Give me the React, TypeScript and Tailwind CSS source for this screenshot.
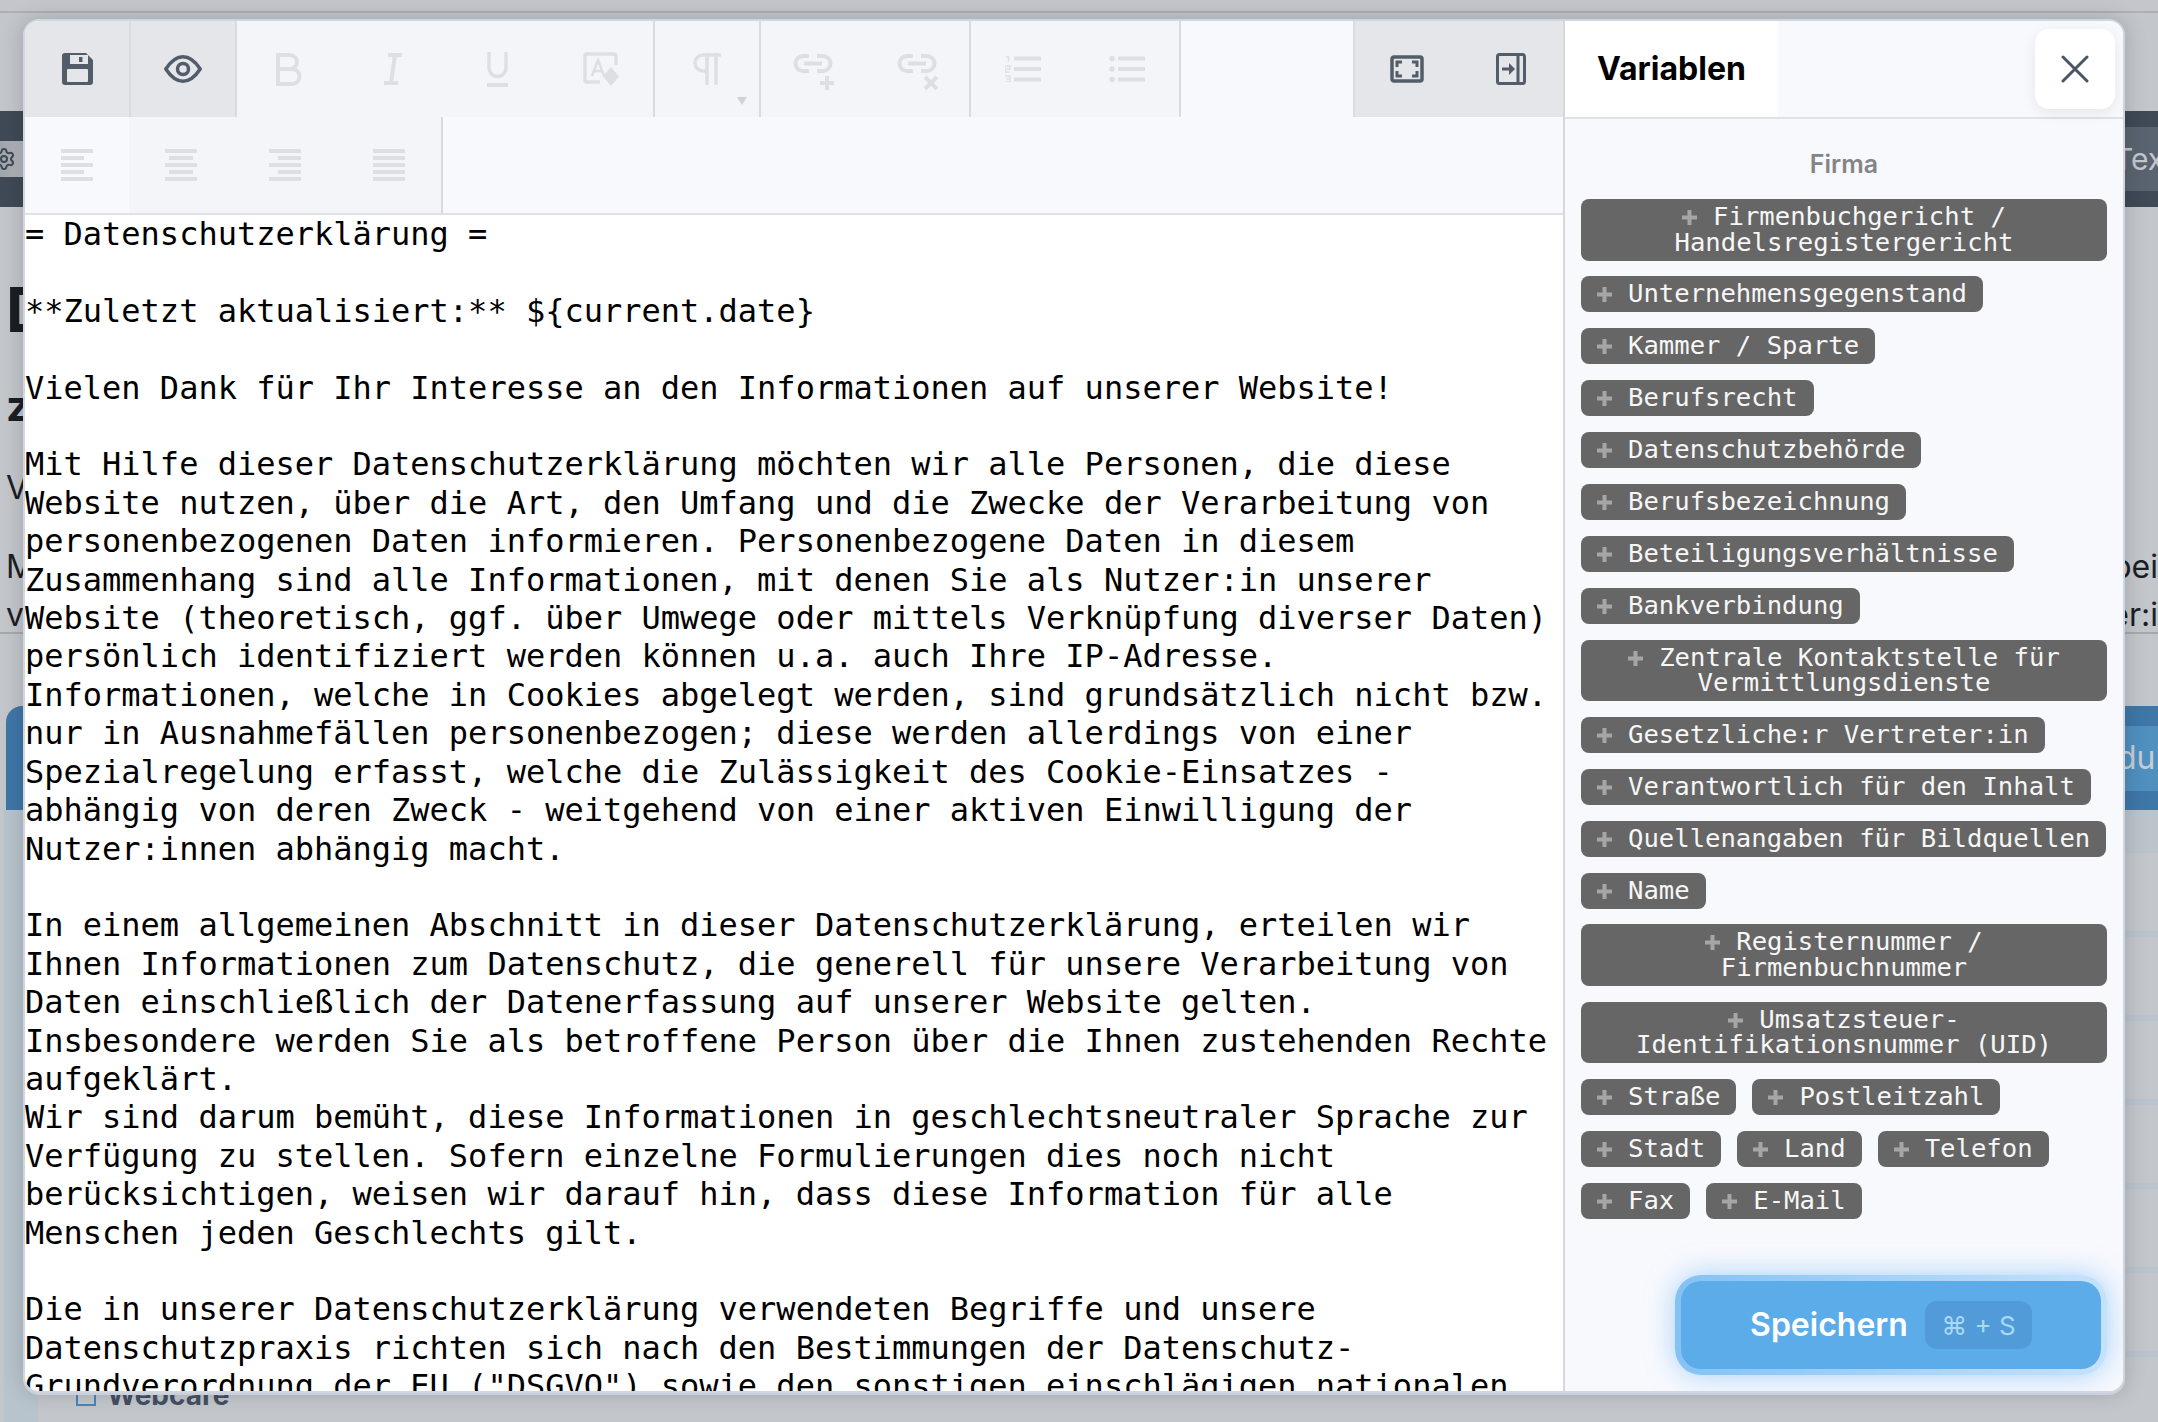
import { FC, ReactNode } from "react";
import { Settings } from "lucide-react";

const mono = "font-['DejaVu_Sans_Mono',monospace]";
const sans = "font-['Inter','Liberation_Sans',sans-serif]";

const editorText = `= Datenschutzerklärung =

**Zuletzt aktualisiert:** \${current.date}

Vielen Dank für Ihr Interesse an den Informationen auf unserer Website!

Mit Hilfe dieser Datenschutzerklärung möchten wir alle Personen, die diese Website nutzen, über die Art, den Umfang und die Zwecke der Verarbeitung von personenbezogenen Daten informieren. Personenbezogene Daten in diesem Zusammenhang sind alle Informationen, mit denen Sie als Nutzer:in unserer Website (theoretisch, ggf. über Umwege oder mittels Verknüpfung diverser Daten) persönlich identifiziert werden können u.a. auch Ihre IP-Adresse.
Informationen, welche in Cookies abgelegt werden, sind grundsätzlich nicht bzw. nur in Ausnahmefällen personenbezogen; diese werden allerdings von einer Spezialregelung erfasst, welche die Zulässigkeit des Cookie-Einsatzes - abhängig von deren Zweck - weitgehend von einer aktiven Einwilligung der Nutzer:innen abhängig macht.

In einem allgemeinen Abschnitt in dieser Datenschutzerklärung, erteilen wir Ihnen Informationen zum Datenschutz, die generell für unsere Verarbeitung von Daten einschließlich der Datenerfassung auf unserer Website gelten.
Insbesondere werden Sie als betroffene Person über die Ihnen zustehenden Rechte aufgeklärt.
Wir sind darum bemüht, diese Informationen in geschlechtsneutraler Sprache zur Verfügung zu stellen. Sofern einzelne Formulierungen dies noch nicht berücksichtigen, weisen wir darauf hin, dass diese Information für alle Menschen jeden Geschlechts gilt.

Die in unserer Datenschutzerklärung verwendeten Begriffe und unsere Datenschutzpraxis richten sich nach den Bestimmungen der Datenschutz-Grundverordnung der EU ("DSGVO") sowie den sonstigen einschlägigen nationalen`;

const variables = [
  "Firmenbuchgericht / Handelsregistergericht",
  "Unternehmensgegenstand",
  "Kammer / Sparte",
  "Berufsrecht",
  "Datenschutzbehörde",
  "Berufsbezeichnung",
  "Beteiligungsverhältnisse",
  "Bankverbindung",
  "Zentrale Kontaktstelle für Vermittlungsdienste",
  "Gesetzliche:r Vertreter:in",
  "Verantwortlich für den Inhalt",
  "Quellenangaben für Bildquellen",
  "Name",
  "Registernummer / Firmenbuchnummer",
  "Umsatzsteuer-Identifikationsnummer (UID)",
  "Straße",
  "Postleitzahl",
  "Stadt",
  "Land",
  "Telefon",
  "Fax",
  "E-Mail",
];

const dark = "#535c69";
const faded = "#dddfe3";

const SaveIcon = () => (
  <svg width="31" height="32" viewBox="0 0 31 32">
    <path d="M3 0H24L31 7V29a3 3 0 0 1-3 3H3a3 3 0 0 1-3-3V3a3 3 0 0 1 3-3Z" fill={dark} />
    <rect x="8" y="2" width="18" height="9" fill="#e4e6ea" />
    <rect x="17" y="4" width="3.5" height="5" fill={dark} />
    <rect x="5" y="16" width="21" height="13" rx="1" fill="#e4e6ea" />
  </svg>
);

const EyeIcon = () => (
  <svg width="38" height="28" viewBox="0 0 38 28" fill="none" stroke={dark} strokeWidth="3.5">
    <path d="M1.8 14C8 4.5 13 1.8 19 1.8S30 4.5 36.2 14C30 23.5 25 26.2 19 26.2S8 23.5 1.8 14Z" strokeLinejoin="round" />
    <circle cx="19" cy="14" r="5.5" />
  </svg>
);

const BoldIcon = () => (
  <svg width="26" height="33" viewBox="0 0 26 33" fill="none" stroke={faded} strokeWidth="4">
    <path d="M2 2H14a7 7 0 0 1 0 14H2ZM2 16H16a7.5 7.5 0 0 1 0 15H2Z" />
  </svg>
);

const ItalicIcon = () => (
  <svg width="18" height="32" viewBox="0 0 18 32" fill="none" stroke={faded} strokeWidth="4">
    <path d="M4 2H18M0 30H14M11 2 7 30" />
  </svg>
);

const UnderlineIcon = () => (
  <svg width="21" height="35" viewBox="0 0 21 35" fill="none" stroke={faded} strokeWidth="3.5">
    <path d="M2 0V16a8.5 8.5 0 0 0 17 0V0" />
    <path d="M0 33H21" strokeWidth="4" />
  </svg>
);

const ImageIcon = () => (
  <svg width="37" height="34" viewBox="0 0 37 34" fill="none" stroke={faded} strokeWidth="3.5">
    <path d="M33 13V4a2 2 0 0 0-2-2H4a2 2 0 0 0-2 2V28a2 2 0 0 0 2 2H17" />
    <path d="M9 24 15 8l6 16M11 19h8" strokeWidth="2.5" />
    <path d="M28 15l8 9.5-8 9.5-8-9.5Z" fill={faded} stroke="none" />
  </svg>
);

const PilcrowIcon = () => (
  <svg width="28" height="32" viewBox="0 0 28 32" fill="none" stroke={faded} strokeWidth="3.5">
    <path d="M14 2H10a8 8 0 0 0 0 16h4" />
    <path d="M14 0V32M23 0V32M12 2H28" />
  </svg>
);

const LinkIcon: FC<{ remove?: boolean }> = ({ remove }) => (
  <svg width="41" height="36" viewBox="0 0 41 36" fill="none" stroke={faded} strokeWidth="4" className="mt-1.5">
    <path d="M16 2H10a7.5 7.5 0 0 0 0 15h6M24 2h6a7.5 7.5 0 0 1 0 15h-6M11 9.5H29" />
    {remove ? <path d="M28 23 40 35M40 23 28 35" /> : <path d="M34 22V36M27 29H41" />}
  </svg>
);

const OrderedIcon = () => (
  <svg width="36" height="26" viewBox="0 0 36 26" fill="none" stroke={faded}>
    <path d="M9 2.5H36M9 13H36M9 23.5H36" strokeWidth="4" />
    <path d="M1 1H3.5V6M0 10H5V13H0V16H5M0 20H5V23H1.5M5 23V26H0" strokeWidth="1.5" />
  </svg>
);

const BulletIcon = () => (
  <svg width="36" height="26" viewBox="0 0 36 26" fill={faded}>
    <circle cx="3" cy="2.5" r="2.7" />
    <circle cx="3" cy="13" r="2.7" />
    <circle cx="3" cy="23.5" r="2.7" />
    <rect x="9" y="0.5" width="27" height="4" />
    <rect x="9" y="11" width="27" height="4" />
    <rect x="9" y="21.5" width="27" height="4" />
  </svg>
);

const AlignIcon: FC<{ bars: [number, number][] }> = ({ bars }) => (
  <svg width="32" height="32" viewBox="0 0 32 32" fill={faded}>
    {bars.map(([x, w], i) => (
      <rect key={i} x={x} y={i * 7} width={w} height="4" />
    ))}
  </svg>
);

const FullscreenIcon = () => (
  <svg width="34" height="28" viewBox="0 0 34 28" fill="none" stroke={dark}>
    <rect x="2" y="2" width="30" height="24" rx="2" strokeWidth="3.5" />
    <path d="M7 12V7H12M22 7H27V12M27 16V21H22M12 21H7V16" strokeWidth="3" />
  </svg>
);

const PanelIcon = () => (
  <svg width="30" height="32" viewBox="0 0 30 32" fill="none" stroke={dark} strokeWidth="3">
    <rect x="1.5" y="1.5" width="27" height="29" rx="2" />
    <path d="M22 2V30" />
    <path d="M6 16H14" />
    <path d="M13 10l6 6-6 6Z" fill={dark} stroke="none" />
  </svg>
);

const ToolButton: FC<{ children: ReactNode; active?: boolean; muted?: boolean; edge?: boolean }> = ({
  children,
  active,
  muted,
  edge,
}) => (
  <div
    className={`relative flex h-full w-[104px] shrink-0 items-center justify-center ${
      active ? "bg-[#e4e6ea]" : muted ? "bg-[#f3f5f9]" : ""
    } ${edge ? "border-r-2 border-[#d9dbdf] w-[106px]" : ""}`}
  >
    {children}
  </div>
);

const Toolbar = () => (
  <div className="shrink-0 border-b-2 border-[#dfe1e5] bg-[#f7f9fd]">
    <div className="flex h-24">
      <ToolButton active edge><SaveIcon /></ToolButton>
      <ToolButton active edge><EyeIcon /></ToolButton>
      <ToolButton muted><BoldIcon /></ToolButton>
      <ToolButton muted><ItalicIcon /></ToolButton>
      <ToolButton muted><UnderlineIcon /></ToolButton>
      <ToolButton muted><ImageIcon /></ToolButton>
      <div className="w-0.5 bg-[#d9dbdf]" />
      <ToolButton muted>
        <PilcrowIcon />
        <div className="absolute right-[12px] bottom-[12px] h-0 w-0 border-x-[5.5px] border-t-[8px] border-x-transparent border-t-[#d0d2d6]" />
      </ToolButton>
      <div className="w-0.5 bg-[#d9dbdf]" />
      <ToolButton muted><LinkIcon /></ToolButton>
      <ToolButton muted><LinkIcon remove /></ToolButton>
      <div className="w-0.5 bg-[#d9dbdf]" />
      <ToolButton muted><OrderedIcon /></ToolButton>
      <ToolButton muted><BulletIcon /></ToolButton>
      <div className="w-0.5 bg-[#d9dbdf]" />
      <div className="flex-1 border-r-2 border-[#d9dbdf]" />
      <ToolButton active><FullscreenIcon /></ToolButton>
      <ToolButton active><PanelIcon /></ToolButton>
    </div>
    <div className="flex h-24">
      <ToolButton>
        <AlignIcon bars={[[0, 32], [0, 23], [0, 32], [0, 23], [0, 32]]} />
      </ToolButton>
      <ToolButton muted>
        <AlignIcon bars={[[0, 32], [4, 24], [0, 32], [4, 24], [0, 32]]} />
      </ToolButton>
      <ToolButton muted>
        <AlignIcon bars={[[0, 32], [9, 23], [0, 32], [9, 23], [0, 32]]} />
      </ToolButton>
      <ToolButton muted>
        <AlignIcon bars={[[0, 32], [0, 32], [0, 32], [0, 32], [0, 32]]} />
      </ToolButton>
      <div className="w-0.5 bg-[#d9dbdf]" />
    </div>
  </div>
);

const VariableChip: FC<{ label: string }> = ({ label }) => (
  <button
    type="button"
    className={`${mono} max-w-full rounded-lg bg-[#666666] pt-[5px] pr-4 pb-[5.5px] pl-4 text-center text-[25.6px] leading-[25.5px] text-[#f7f7f7]`}
  >
    <svg width="15" height="15" viewBox="0 0 15 15" className="mr-4 inline-block align-[0px]" fill="#a6a6a6">
      <rect x="0" y="5.5" width="15" height="4" />
      <rect x="5.5" y="0" width="4" height="15" />
    </svg>
    {label}
  </button>
);

const Sidebar = () => (
  <div className="relative flex flex-1 flex-col border-l-2 border-[#d5d7db] bg-[#f8f9fd]">
    <div className="flex h-[98px] shrink-0 items-start justify-between border-b-2 border-[#e0e2e6] pr-2">
      <div className={`${sans} flex h-24 w-[213px] items-center bg-white pl-8 text-[32px] font-bold text-black`}>
        Variablen
      </div>
      <button
        type="button"
        className="relative z-10 mt-2 flex h-20 w-20 items-center justify-center rounded-[14px] bg-white shadow-[0_4px_14px_rgba(0,0,0,0.08)]"
      >
        <svg width="28" height="28" viewBox="0 0 28 28" fill="none" stroke="#4a5563" strokeWidth="3">
          <path d="M2 2 26 26M26 2 2 26" strokeLinecap="round" />
        </svg>
      </button>
    </div>
    <div className="pt-[29px] pr-4 pl-4">
      <div className={`${sans} mb-[19px] text-center text-[25px] leading-8 font-semibold text-[#858585]`}>Firma</div>
      <div className="flex flex-wrap gap-x-4 gap-y-[15.88px]">
        {variables.map((v) => (
          <VariableChip key={v} label={v} />
        ))}
      </div>
    </div>
    <div className="absolute right-4 bottom-4 rounded-[26px] bg-gradient-to-r from-[#84c2f4] to-[#c5e2fb] p-[6px] shadow-[0_0_28px_rgba(96,175,245,0.55)]">
      <button
        type="button"
        className={`${sans} flex h-[88px] w-[420px] items-center justify-center gap-[17px] rounded-[20px] bg-[#5bace9] text-[32px] font-semibold text-white`}
      >
        Speichern
        <span className="flex h-12 w-[107px] items-center justify-center rounded-xl bg-[#519cd8] text-[26px] font-normal text-[#a9d7f6]">
          ⌘ + S
        </span>
      </button>
    </div>
  </div>
);

const Modal = () => (
  <div className="absolute top-[19px] left-[23px] flex h-[1374px] w-[2102px] overflow-hidden rounded-2xl border-2 border-[#cfd6df] bg-white shadow-[0_2px_0_#c9d0d9,0_0_22px_rgba(0,0,0,0.18)]">
    <div className="flex w-[1538px] shrink-0 flex-col">
      <Toolbar />
      <div className={`${mono} flex-1 overflow-hidden text-[32px] leading-[38.4px] whitespace-pre-wrap text-black`}>
        {editorText}
      </div>
    </div>
    <Sidebar />
  </div>
);

// dimmed page behind the dialog, only the edges stay visible
const BackgroundPage = () => (
  <div className="flex h-full flex-col overflow-hidden text-[#1b1f25]">
    <div className="h-[13px] shrink-0 border-b-2 border-[#aeb0b6]" />
    <div className="h-[98px] shrink-0" />
    <div className="flex h-24 shrink-0 items-center justify-between bg-[#3f4a56]">
      <div className="flex h-[36px] w-[24px] items-center overflow-hidden bg-gradient-to-r from-[#a0a5ab] to-[#b5b8bd]">
        <Settings size={24} color="#3f4a56" strokeWidth={2} className="-ml-[8px] shrink-0" />
      </div>
      <div className={`${sans} flex h-16 w-[36px] items-center overflow-hidden bg-[#5a6470] text-[30px] text-[#c4c7cb]`}>
        <span className="-ml-2">Text</span>
      </div>
    </div>
    <div className={`${sans} flex h-[427px] shrink-0 flex-col border-b-2 border-[#a6aab0] pl-[6px]`}>
      <div className="mt-[71px] text-[62px] leading-[64px] font-bold">D</div>
      <div className="mt-[40px] text-[42px] leading-[48px] font-bold">z</div>
      <div className="mt-[38px] text-[32px] leading-[40px]">V</div>
      <div className="mt-[39px] flex justify-between text-[32px] leading-[40px]">
        <span>M</span>
        <span>bei</span>
      </div>
      <div className="mt-[8px] flex justify-between text-[32px] leading-[40px]">
        <span>v</span>
        <span>er:i</span>
      </div>
    </div>
    <div className="mt-[72px] ml-[6px] flex h-[104px] shrink-0 items-center justify-end rounded-tl-2xl bg-[#3f77a8]">
      <div className={`${sans} flex h-[65px] w-[33px] items-center overflow-hidden bg-[#4f90bf] text-[32px] text-[#c4ced6]`}>
        <span className="-ml-2">dul</span>
      </div>
    </div>
    <div className="flex flex-1">
      <div className="ml-1 w-[34px] shrink-0 bg-[#b8c4cd]" />
      <div className="flex flex-1 flex-col">
        <div className="h-[43px] shrink-0 bg-[#bcc4cb]" />
        {[0, 1, 2, 3, 4, 5].map((i) => (
          <div key={i} className="h-[84px] shrink-0 border-b-[6px] border-[#b9c4cd]" />
        ))}
        <div className={`${sans} flex items-center gap-[11px] pt-[22px] pl-[38px] text-[28px] leading-8 font-bold text-[#445063]`}>
          <div className="h-[22px] w-5 border-2 border-[#4a85b8]" />
          Webcare
        </div>
      </div>
    </div>
  </div>
);

export default function App() {
  return (
    <div className="relative h-[1422px] w-[2158px] overflow-hidden bg-[#c3c6cb]">
      <BackgroundPage />
      <Modal />
    </div>
  );
}
